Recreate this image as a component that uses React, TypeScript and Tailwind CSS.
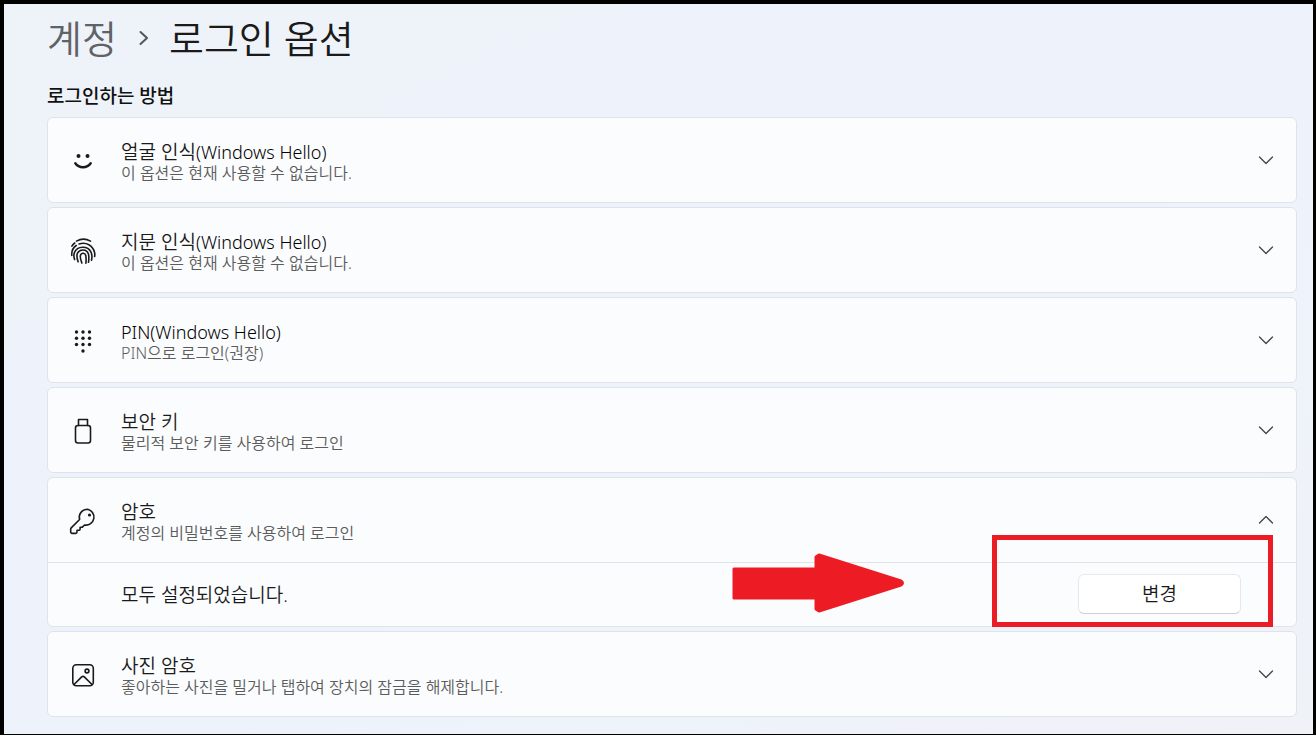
import { useState, type ReactNode } from "react";

const stroke = {
  fill: "none",
  stroke: "currentColor",
  strokeWidth: 1.6,
  strokeLinecap: "round" as const,
  strokeLinejoin: "round" as const,
};

function FaceIcon() {
  return (
    <svg viewBox="0 0 28 28" className="size-7" aria-hidden="true">
      <circle cx="9.5" cy="9" r="2" fill="currentColor" />
      <circle cx="18.5" cy="9" r="2" fill="currentColor" />
      <path d="M6.3 16.3c3.6 5.2 11.8 5.2 15.4 0" {...stroke} strokeWidth={2.4} />
    </svg>
  );
}

function FingerprintIcon() {
  return (
    <svg viewBox="0 0 28 28" className="size-7" aria-hidden="true">
      <g {...stroke} transform="translate(0.5 0.5)">
        <path d="M7 3.6c4.2-2.4 9.8-2.4 14 0" />
        <path d="M2.4 8.7c.8-1.3 1.7-2.3 2.9-3.2" />
        <path d="M9.6 6.5c7-2.2 13.8 1.3 15.5 8.6.3 1.3.3 2.5 0 3.9" />
        <path d="M2.3 18c-.4-4.5 1.3-7.9 4.5-10" />
        <path d="M5.1 22c-1-2.8-.9-5.2-.1-7.1 2.8-6.6 13.1-7 16.4-.5 1.2 2.6 1.3 5.3.6 8.3" />
        <path d="M8.6 24.3c-1.2-3.5-1.7-6.4-.6-8.6 2.400-4.500 9.200-4.200 10.900.7.700 2.500.6 5 .1 8.400" />
        <path d="M12.300 25.400c-1.300-3.400-2-6.300-1.200-8 1.200-2.500 4.700-2.100 5.200.8.400 2.400.4 4.600.1 7.400" />
      </g>
    </svg>
  );
}

const pinDots = [
  [7, 4], [13.5, 4], [20, 4],
  [7, 10.3], [13.5, 10.3], [20, 10.3],
  [7, 16.5], [13.5, 16.5], [20, 16.5],
  [13.5, 23],
];

function PinIcon() {
  return (
    <svg viewBox="0 0 28 28" className="size-7" aria-hidden="true">
      <g transform="translate(0.5 1)">
        {pinDots.map(([x, y]) => (
          <circle key={`${x}-${y}`} cx={x} cy={y} r="1.7" fill="currentColor" />
        ))}
      </g>
    </svg>
  );
}

function UsbIcon() {
  return (
    <svg viewBox="0 0 28 28" className="size-7" aria-hidden="true">
      <g {...stroke}>
        <rect x="6.5" y="8.5" width="15" height="17.5" rx="2.5" />
        <path d="M9.5 8.500V2.500h9v6" />
      </g>
    </svg>
  );
}

function KeyIcon() {
  return (
    <svg viewBox="0 0 28 28" className="size-7" aria-hidden="true">
      <path
        d="M18.300 2.200a8 8 0 0 0-7.700 10.300L2.200 20.900a1.600 1.600 0 0 0-.5 1.200v3a1.300 1.300 0 0 0 1.300 1.300h3.700a1.300 1.300 0 0 0 1.300-1.300v-1.800h1.900a1.200 1.200 0 0 0 1.200-1.200v-1.900h1.700c.4 0 .8-.2 1-.5l1.800-1.700a8 8 0 1 0 2.700-15.800Z"
        {...stroke}
      />
      <circle cx="20.500" cy="8" r="1.600" fill="currentColor" />
    </svg>
  );
}

function PictureIcon() {
  return (
    <svg viewBox="0 0 28 28" className="size-7" aria-hidden="true">
      <g {...stroke}>
        <rect x="3.800" y="3.800" width="20.500" height="21" rx="3.500" />
        <circle cx="18" cy="10" r="1.900" />
        <path d="m5 23.500 7.700-7.600a1.900 1.900 0 0 1 2.600 0l7.700 7.600" />
      </g>
    </svg>
  );
}

function Chevron({ open }: { open: boolean }) {
  return (
    <svg viewBox="0 0 16 16" className="size-4 shrink-0 text-[#444]" aria-hidden="true">
      <path
        d={open ? "M1.500 11 8 4.500l6.500 6.500" : "M1.500 5 8 11.500 14.500 5"}
        {...stroke}
        strokeWidth={1.3}
      />
    </svg>
  );
}

type Option = { id: string; title: string; latin?: string; note: string; icon: ReactNode; body?: ReactNode };

const options: Option[] = [
  { id: "face", title: "얼굴 인식", latin: "(Windows Hello)", note: "이 옵션은 현재 사용할 수 없습니다.", icon: <FaceIcon /> },
  { id: "finger", title: "지문 인식", latin: "(Windows Hello)", note: "이 옵션은 현재 사용할 수 없습니다.", icon: <FingerprintIcon /> },
  { id: "pin", title: "", latin: "PIN(Windows Hello)", note: "PIN으로 로그인(권장)", icon: <PinIcon /> },
  { id: "key", title: "보안 키", note: "물리적 보안 키를 사용하여 로그인", icon: <UsbIcon /> },
  { id: "password", title: "암호", note: "계정의 비밀번호를 사용하여 로그인", icon: <KeyIcon />, body: <PasswordBody /> },
  { id: "picture", title: "사진 암호", note: "좋아하는 사진을 밀거나 탭하여 장치의 잠금을 해제합니다.", icon: <PictureIcon /> },
];

function PasswordBody() {
  return (
    <div className="relative flex h-[63px] items-center justify-between pr-[55px] pl-[73px]">
      <p className="text-[19px] leading-6">모두 설정되었습니다.</p>
      <button
        type="button"
        className="mb-0.5 h-10 w-[163px] rounded-md border border-[#e6e8ea] border-b-[#cfd1d3] bg-white text-[19px] leading-6"
      >
        변경
      </button>
      <svg
        viewBox="0 0 174 60"
        className="pointer-events-none absolute -top-[10px] right-[391px] h-[60px] w-[174px]"
        aria-hidden="true"
      >
        <path
          d="M3 16h82V4l3-2 82 26q3 2 0 4L88 58l-3-2V45H3Z"
          fill="#ed1c24"
          stroke="#ed1c24"
          strokeWidth="3"
          strokeLinejoin="round"
        />
      </svg>
      <div className="pointer-events-none absolute -top-[28px] right-[23px] h-[92px] w-[281px] border-5 border-[#ec1c24]" />
    </div>
  );
}

function OptionCard({ option }: { option: Option }) {
  const [open, setOpen] = useState(option.id === "password");
  return (
    <li className="rounded-md border border-[#dfe4ea] bg-[#fbfcfe]">
      <button
        type="button"
        aria-expanded={open}
        onClick={() => setOpen(!open)}
        className="flex h-21 w-full items-center pr-[22px] pl-[21px] text-left"
      >
        <span className="pt-0.5">{option.icon}</span>
        <span className="ml-6 flex flex-1 flex-col pt-[3px]">
          <span className="text-[19px] leading-[22px]">
            {option.title}
            {option.latin && <span className="text-[18px] text-black">{option.latin}</span>}
          </span>
          <span className="text-[16px] leading-5 text-[#5c5c5c]">{option.note}</span>
        </span>
        <Chevron open={open} />
      </button>
      {open && option.body && <div className="border-t border-[#dfe3e8]">{option.body}</div>}
    </li>
  );
}

export default function App() {
  return (
    <div className="min-h-screen border-t-4 border-r-3 border-b border-l-4 border-black bg-linear-to-br from-[#eef3f9] via-[#eef2fb] to-[#eff3f8] pr-4 pb-4 pl-[43px] font-['Noto_Sans','Noto_Sans_CJK_KR',sans-serif] font-[350] text-[#1a1a1a]">
      <nav className="flex h-[68px] items-center text-[38px] leading-[56px]">
        <a href="#accounts" className="text-[#606266]">계정</a>
        <svg viewBox="0 0 12 16" className="mx-5 h-4 w-3 text-[#555]" aria-hidden="true">
          <path d="m3.500 2 6.500 6-6.500 6" {...stroke} strokeWidth={2} />
        </svg>
        <h1>로그인 옵션</h1>
      </nav>
      <h2 className="mt-2.5 mb-[7px] text-[19px] leading-7 font-medium text-[#111]">로그인하는 방법</h2>
      <ul className="flex flex-col gap-1">
        {options.map((option) => (
          <OptionCard key={option.id} option={option} />
        ))}
      </ul>
    </div>
  );
}
